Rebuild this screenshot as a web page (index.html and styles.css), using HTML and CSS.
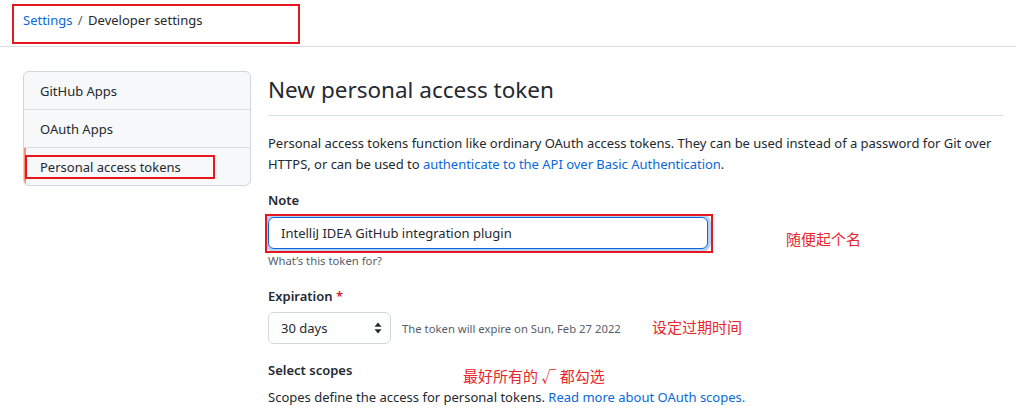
FILE: index.html
```html
<!DOCTYPE html>
<html lang="en">
<head>
<meta charset="utf-8">
<title>New personal access token</title>
<link rel="stylesheet" href="styles.css">
</head>
<body>
<header class="topbar">
  <nav class="crumbs"><a href="#" class="link">Settings</a> <span class="sep">/</span> Developer settings</nav>
  <div class="mark mark-crumbs"></div>
</header>
<div class="layout">
  <aside class="side">
    <div class="side-item">GitHub Apps</div>
    <div class="side-item">OAuth Apps</div>
    <div class="side-item selected">Personal access tokens</div>
    <div class="mark mark-side"></div>
  </aside>
  <main class="main">
    <h2 class="subhead">New personal access token</h2>
    <p class="intro">Personal access tokens function like ordinary OAuth access tokens. They can be used instead of a password for Git over HTTPS, or can be used to <a href="#" class="link">authenticate to the API over Basic Authentication</a>.</p>
    <div class="field">
      <label class="label">Note</label>
      <div class="input-wrap">
        <input class="input" type="text" value="IntelliJ IDEA GitHub integration plugin">
        <div class="mark mark-input"></div>
        <span class="note note-name">随便起个名</span>
      </div>
      <div class="hint">What’s this token for?</div>
    </div>
    <div class="field field-exp">
      <label class="label">Expiration <span class="req">*</span></label>
      <div class="exp-row">
        <div class="select"><span>30 days</span>
          <svg class="arrows" width="8" height="12" viewBox="0 0 8 12"><path d="M4 0.5 L7.5 4.8 H0.5 Z M4 11.5 L7.5 7.2 H0.5 Z" fill="#24292f"/></svg>
        </div>
        <span class="exp-text">The token will expire on Sun, Feb 27 2022</span>
        <span class="note note-exp">设定过期时间</span>
      </div>
    </div>
    <div class="field field-scopes">
      <div class="label">Select scopes</div>
      <span class="note note-scopes">最好所有的 √ 都勾选</span>
      <p class="scopes-text">Scopes define the access for personal tokens. <a href="#" class="link">Read more about OAuth scopes.</a></p>
    </div>
  </main>
</div>
</body>
</html>
```
FILE: styles.css
```css
html, body {
  margin: 0;
  padding: 0;
  background: #ffffff;
  color: #24292f;
  font-family: "Noto Sans", "Open Sans", sans-serif;
  font-size: 13px;
  overflow: hidden;
}
.link { color: #0969da; text-decoration: none; }

.topbar {
  position: relative;
  height: 47px;
  border-bottom: 1px solid #d8dee4;
  box-sizing: border-box;
  padding: 10px 0 0 23px;
}
.crumbs { font-size: 13px; line-height: 21px; }
.sep { color: #57606a; margin: 0 2px; }

.mark {
  position: absolute;
  border: 2px solid #e8161f;
  box-sizing: border-box;
  pointer-events: none;
}
.mark-crumbs { left: 12px; top: 4px; width: 288px; height: 40px; }

.layout {
  display: flex;
  gap: 17px;
  padding: 24px 0 0 23px;
}
.side {
  position: relative;
  width: 228px;
  flex: none;
  align-self: flex-start;
  border: 1px solid #d0d7de;
  border-radius: 6px;
  background: #f6f8fa;
  box-sizing: border-box;
  overflow: hidden;
}
.side-item {
  height: 38px;
  line-height: 38px;
  padding-left: 16px;
  border-top: 1px solid #d8dee4;
  box-sizing: border-box;
  font-size: 13px;
}
.side-item:first-child { border-top: 0; height: 37px; line-height: 38px; }
.side-item.selected { box-shadow: inset 2px 0 0 #fd8c73; }
.mark-side { left: 1px; top: 83px; width: 190px; height: 24px; }

.main { width: 735px; flex: none; }
.subhead {
  margin: 0 0 17px;
  padding: 1px 0 7px;
  border-bottom: 1px solid #d8dee4;
  font-size: 22.5px;
  font-weight: 400;
  line-height: 36px;
}
.intro { margin: 0; line-height: 21px; font-size: 13px; letter-spacing: -0.02px; }

.field { margin-top: 15px; }
.label { display: block; font-weight: 600; font-size: 13px; line-height: 21px; }
.req { color: #cf222e; }
.input-wrap { position: relative; margin-top: 6px; width: 440px; }
.input {
  display: block;
  width: 440px;
  height: 32px;
  box-sizing: border-box;
  padding: 0 12px;
  border: 1px solid #0969da;
  border-radius: 6px;
  box-shadow: 0 0 0 3px rgba(9, 105, 218, 0.3);
  font: inherit;
  font-size: 13px;
  color: #24292f;
  outline: none;
  background: #fff;
}
.mark-input { left: -3px; top: -3px; width: 448px; height: 39px; }
.hint { font-size: 11.3px; color: #57606a; line-height: 18px; margin-top: 3px; }

.note {
  position: absolute;
  color: #e8262b;
  font-family: "Noto Sans CJK SC", sans-serif;
  font-size: 15px;
  line-height: 20px;
  white-space: nowrap;
}
.note-name { left: 518px; top: 12px; }

.field-exp { margin-top: 16px; }
.exp-row { position: relative; display: flex; align-items: center; margin-top: 5px; height: 32px; }
.select {
  width: 123px;
  height: 32px;
  box-sizing: border-box;
  border: 1px solid #d0d7de;
  border-radius: 6px;
  display: flex;
  align-items: center;
  justify-content: space-between;
  padding: 0 8px 0 12px;
  font-size: 13px;
  background: #fff;
}
.exp-text { margin-left: 11px; font-size: 11.3px; color: #57606a; }
.note-exp { left: 384px; top: 5px; }

.field-scopes { position: relative; margin-top: 16px; }
.note-scopes { left: 195px; top: 6px; }
.scopes-text { margin: 6px 0 0; font-size: 13px; line-height: 21px; }
```
